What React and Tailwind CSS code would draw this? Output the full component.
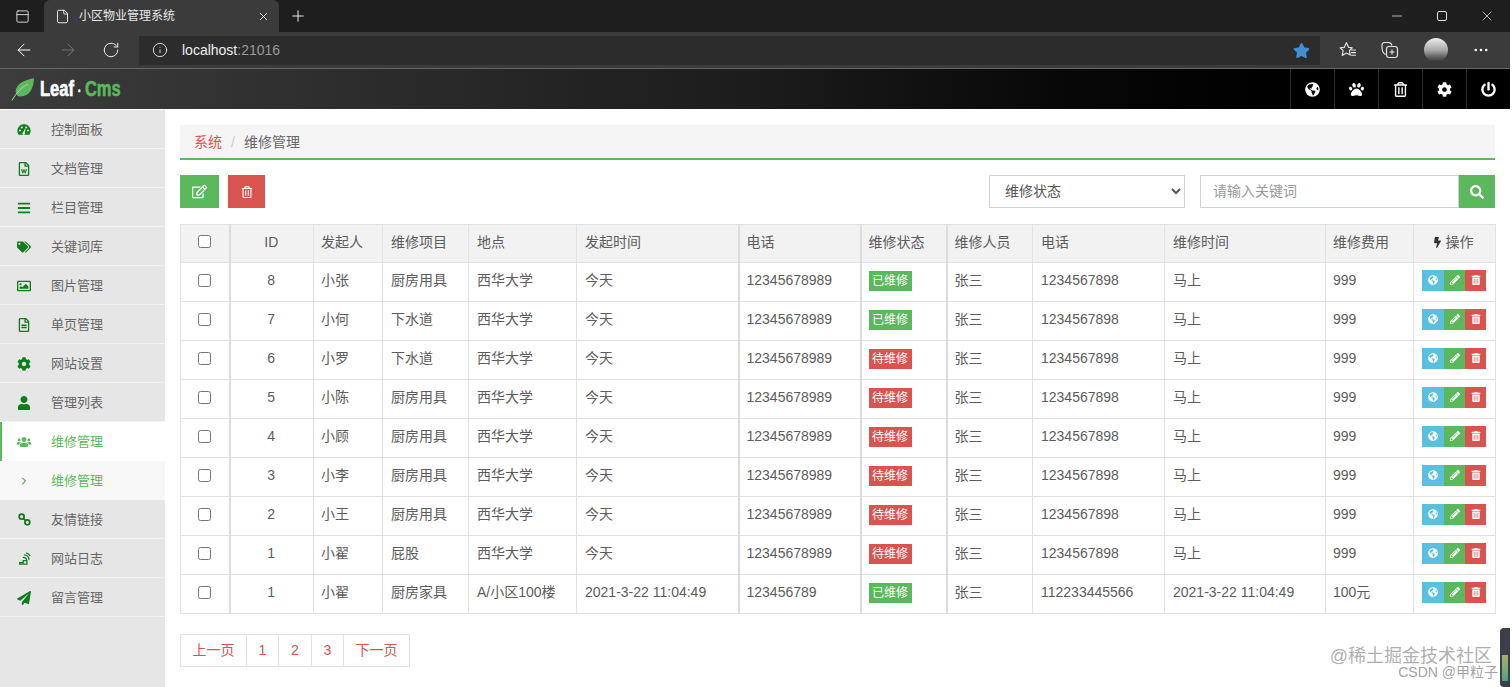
import {
  FaBars, FaBolt, FaCog, FaGlobeAmericas, FaPaperPlane, FaPaw, FaPencilAlt, FaPowerOff,
  FaRegEdit, FaRegFileAlt, FaRegFileWord, FaRegImage, FaRegTrashAlt, FaSearch,
  FaTags, FaTrashAlt, FaUser, FaUsers, FaStar,
} from "react-icons/fa";
import { ArrowLeft, ArrowRight, RotateCw, Info, Plus, X, Minus, Ellipsis, File, PanelTop, ChevronRight } from "lucide-react";

const MENU = [
  { label: "控制面板", icon: <DashIcon /> },
  { label: "文档管理", icon: <FaRegFileWord /> },
  { label: "栏目管理", icon: <FaBars /> },
  { label: "关键词库", icon: <FaTags /> },
  { label: "图片管理", icon: <FaRegImage /> },
  { label: "单页管理", icon: <FaRegFileAlt /> },
  { label: "网站设置", icon: <FaCog /> },
  { label: "管理列表", icon: <FaUser /> },
  { label: "维修管理", icon: <FaUsers size={16} />, state: "active" },
  { label: "维修管理", icon: <ChevronRight size={12} strokeWidth={2} />, state: "sub" },
  { label: "友情链接", icon: <ChainIcon /> },
  { label: "网站日志", icon: <LogIcon /> },
  { label: "留言管理", icon: <FaPaperPlane /> },
];

const ROWS = [
  ["8", "小张", "厨房用具", "西华大学", "今天", "12345678989", true, "张三", "1234567898", "马上", "999"],
  ["7", "小何", "下水道", "西华大学", "今天", "12345678989", true, "张三", "1234567898", "马上", "999"],
  ["6", "小罗", "下水道", "西华大学", "今天", "12345678989", false, "张三", "1234567898", "马上", "999"],
  ["5", "小陈", "厨房用具", "西华大学", "今天", "12345678989", false, "张三", "1234567898", "马上", "999"],
  ["4", "小顾", "厨房用具", "西华大学", "今天", "12345678989", false, "张三", "1234567898", "马上", "999"],
  ["3", "小李", "厨房用具", "西华大学", "今天", "12345678989", false, "张三", "1234567898", "马上", "999"],
  ["2", "小王", "厨房用具", "西华大学", "今天", "12345678989", false, "张三", "1234567898", "马上", "999"],
  ["1", "小翟", "屁股", "西华大学", "今天", "12345678989", false, "张三", "1234567898", "马上", "999"],
  ["1", "小翟", "厨房家具", "A/小区100楼", "2021-3-22 11:04:49", "123456789", true, "张三", "112233445566", "2021-3-22 11:04:49", "100元"],
];

const COLS = [49, 84, 69, 86, 108, 162, 122, 86, 86, 132, 161, 88, 82];
const HEADS = ["ID", "发起人", "维修项目", "地点", "发起时间", "电话", "维修状态", "维修人员", "电话", "维修时间", "维修费用"];
const thick = [0, 5, 6, 7];
const nudged = [1, 10];

function DashIcon() {
  return (
    <svg viewBox="0 0 16 14" width="14" height="13" fill="currentColor">
      <path fillRule="evenodd" d="M8 1a7.500 7.500 0 0 1 6.300 11.600c-.2.300-.5.400-.8.400h-11c-.3 0-.6-.1-.8-.4A7.500 7.500 0 0 1 8 1zM3.500 7a1.200 1.200 0 1 0 0 2.400 1.200 1.200 0 0 0 0-2.400zM5.500 3.500a1.200 1.200 0 1 0 0 2.400 1.200 1.200 0 0 0 0-2.400zM10.500 3.500a1.200 1.200 0 1 0 0 2.400 1.200 1.200 0 0 0 0-2.400zM12.500 7a1.200 1.200 0 1 0 0 2.400 1.200 1.200 0 0 0 0-2.400zM9 6 7 10a1.500 1.500 0 1 0 2 .7l.8-4.500z" />
    </svg>
  );
}

function ChainIcon() {
  return (
    <svg viewBox="0 0 16 16" width="13" height="13" fill="none" stroke="currentColor" strokeWidth="2.200">
      <circle cx="4.500" cy="4.500" r="3" />
      <circle cx="11.500" cy="11.500" r="3" />
      <path d="M6.500 6.500l3 3" />
    </svg>
  );
}

function LogIcon() {
  return (
    <svg viewBox="0 0 16 16" width="13" height="13" fill="none" stroke="currentColor" strokeWidth="1.500">
      <path d="M2 15h9V10.500H6.500V13H2zM6 6.500c2.500 0 4.500 1.500 4.500 3.500M7.500 3.500c3.500 0 6 2.500 6 6M10 1c2 .5 4 2 5 4" />
    </svg>
  );
}

function Leaf() {
  return (
    <svg viewBox="0 0 24 24" width="24" height="24">
      <path d="M4.500 15C5 6.500 13 3.500 23 1C22.500 10.500 19.500 19.500 9 19.500C7 19.500 5.500 18 4.500 15Z" fill="#5cb85c" />
      <path d="M1 23.500C5 16 10 11 17 7" stroke="#a8dca8" strokeWidth="1" fill="none" />
    </svg>
  );
}

function FavoritesIcon() {
  return (
    <svg viewBox="0 0 20 20" width="21" height="21" fill="none" stroke="#e8e8e8" strokeWidth="1.100">
      <path d="M9 2.500l2 4.500 3.500.4-2.600 2.700.7 4.300-3.600-2-4 2.300.8-4.600L3 7.500 7 7z" strokeLinejoin="round" />
      <path d="M13.500 9.500H18M13.500 12H18M13.500 14.500H18" />
    </svg>
  );
}

function CollectionsIcon() {
  return (
    <svg viewBox="0 0 20 20" width="20" height="20" fill="none" stroke="#e8e8e8" strokeWidth="1.100">
      <path d="M5.500 14.500C3 13 2 11 2 8V5a2.500 2.500 0 0 1 2.500-2.500h4c2 0 3 1 3.500 3" />
      <rect x="6.500" y="6.500" width="11" height="11" rx="2.500" />
      <path d="M12 9.500v5M9.500 12h5" />
    </svg>
  );
}

function BrowserChrome() {
  return (
    <div className="mr-[2px] text-white">
      <div className="flex h-[32px] bg-[#1e1e1e]">
        <div className="flex w-[44px] items-center justify-center">
          <PanelTop size={15} strokeWidth={1.5} color="#e0e0e0" />
        </div>
        <div className="flex w-[235px] items-center rounded-t-md bg-[#3b3b3b] pl-[11px] pr-[9px]">
          <File size={15} strokeWidth={1.4} />
          <span className="ml-[9px] text-[12px] text-[#e8e8e8]">小区物业管理系统</span>
          <X size={13} strokeWidth={1.5} className="ml-auto" />
        </div>
        <div className="ml-[10px] flex items-center">
          <Plus size={18} strokeWidth={1.2} />
        </div>
        <div className="ml-auto flex items-center gap-[32px] pr-[15px]">
          <Minus size={16} strokeWidth={1} />
          <span className="h-[10px] w-[10px] rounded-[2px] border border-[#e0e0e0]" />
          <X size={16} strokeWidth={1} />
        </div>
      </div>
      <div className="flex h-[37px] items-center border-b border-[#666] bg-[#3b3b3b]">
        <ArrowLeft size={20} strokeWidth={1.2} className="ml-[14px]" />
        <ArrowRight size={20} strokeWidth={1.2} color="#777" className="ml-[24px]" />
        <RotateCw size={18} strokeWidth={1.2} className="ml-[24px]" />
        <div className="ml-[19px] flex h-[29px] w-[1181px] items-center bg-[#2c2c2c] pl-[13px] pr-[10px]">
          <Info size={16} strokeWidth={1.2} />
          <span className="ml-[14px] text-[14px] text-[#f0f0f0]">
            localhost<span className="text-[#999]">:21016</span>
          </span>
          <FaStar size={17} color="#3f8fd2" className="ml-auto" />
        </div>
        <div className="ml-[17px]"><FavoritesIcon /></div>
        <div className="ml-[22px]"><CollectionsIcon /></div>
        <span className="ml-[24px] h-[24px] w-[24px] rounded-full bg-gradient-to-b from-[#eeeeee] via-[#aaaaaa] to-[#333333]" />
        <Ellipsis size={18} strokeWidth={1.5} className="ml-[24px]" />
      </div>
    </div>
  );
}

function TopBar() {
  return (
    <div className="mr-[2px] flex h-[40px] items-center bg-gradient-to-r from-[#3c3c3c] via-[#1c1c1c] to-[#000000]">
      <div className="ml-[11px] flex items-center">
        <Leaf />
        <div className="ml-[5px] w-[84px] origin-left scale-x-75 whitespace-nowrap text-[22px] font-bold leading-none [-webkit-text-stroke:0.6px_currentColor]">
          <span className="text-white">Leaf</span>
          <span className="mx-[5px] text-[14px] text-white">·</span>
          <span className="text-[#5cb85c]">Cms</span>
        </div>
      </div>
      <div className="ml-auto flex h-full bg-black text-white">
        {[<FaGlobeAmericas />, <FaPaw />, <FaRegTrashAlt />, <FaCog />, <FaPowerOff />].map((icon, i) => (
          <div key={i} className="flex w-[44px] items-center justify-center border-l border-[#2a2a2a] text-[15px]">
            {icon}
          </div>
        ))}
      </div>
    </div>
  );
}

function Sidebar() {
  return (
    <aside className="w-[165px] shrink-0 bg-[#e6e6e6]">
      {MENU.map((item, i) => {
        const rowCls = item.state === "active"
          ? "border-l-2 border-l-[#5cb85c] bg-white pl-[15px] text-[#5cb85c]"
          : item.state === "sub"
            ? "bg-[#f8f8f8] pl-[17px] text-[#5cb85c]"
            : "pl-[17px] text-[#666] shadow-[inset_0_-1px_0_#f2f2f2]";
        const iconCls = item.state === "active" ? "text-[#5cb85c]" : "text-[#0f7d1c]";
        return (
          <div key={i} className={`flex h-[39px] items-center text-[13px] ${rowCls}`}>
            <span className={`flex w-[14px] justify-center text-[14px] ${iconCls}`}>{item.icon}</span>
            <span className="ml-[20px]">{item.label}</span>
          </div>
        );
      })}
    </aside>
  );
}

function Toolbar() {
  return (
    <div className="mt-[15px] flex h-[33px]">
      <button className="flex w-[39px] items-center justify-center bg-[#5cb85c] text-[15px] text-white"><FaRegEdit /></button>
      <button className="ml-[9px] flex w-[37px] items-center justify-center bg-[#d9534f] text-[12px] text-white"><FaRegTrashAlt /></button>
      <select className="ml-auto h-full w-[196px] border border-[#ccd3d3] bg-white pb-[2px] pl-[11px] pr-[4px] text-[14px] text-[#555]">
        <option>维修状态</option>
      </select>
      <input
        placeholder="请输入关键词"
        className="ml-[15px] h-full w-[259px] border border-[#ccd3d3] px-[12px] pb-[2px] text-[14px] text-[#555] outline-none placeholder:text-[#999]"
      />
      <button className="flex w-[36px] items-center justify-center bg-[#5cb85c] text-[14px] text-white"><FaSearch /></button>
    </div>
  );
}

function DataTable() {
  const cell = "border border-[#e2e2e2] px-[8px]";
  const thickCell = "border-l-2 border-l-[#dcdcdc] pl-[7px]";
  return (
    <table className="mt-[16px] w-[1315px] table-fixed border-collapse text-[14px] text-[#5c5c5c]">
      <colgroup>
        {COLS.map((w, i) => <col key={i} style={{ width: w }} />)}
      </colgroup>
      <thead>
        <tr className="h-[38px] bg-[#f2f2f2]">
          <th className={`${cell} pb-[5px] text-center font-normal`}><input type="checkbox" readOnly className="align-middle" /></th>
          {HEADS.map((h, i) => (
            <th key={i} className={`${cell} pb-[2px] font-normal ${i === 0 ? "text-center" : "text-left"} ${thick.includes(i) ? thickCell : ""} ${nudged.includes(i) ? "pl-[7px]" : ""}`}>{h}</th>
          ))}
          <th className={`${cell} pb-[2px] pr-[12px] text-center font-normal`}>
            <span className="inline-flex items-center justify-center gap-[3px]"><FaBolt size={11} color="#333" />操作</span>
          </th>
        </tr>
      </thead>
      <tbody>
        {ROWS.map((r, ri) => (
          <tr key={ri} className="h-[39px] bg-white [&>td]:pb-[4px]">
            <td className={`${cell} text-center`}><input type="checkbox" readOnly className="mb-[1px] align-middle" /></td>
            <td className={`${cell} ${thickCell} text-center`}>{r[0]}</td>
            <td className={`${cell} pl-[7px]`}>{r[1]}</td>
            <td className={cell}>{r[2]}</td>
            <td className={cell}>{r[3]}</td>
            <td className={cell}>{r[4]}</td>
            <td className={`${cell} ${thickCell}`}>{r[5]}</td>
            <td className={`${cell} ${thickCell}`}>
              <span className={`inline-flex h-[20px] w-[43px] items-center justify-center text-[12px] text-white ${r[6] ? "bg-[#5cb85c]" : "bg-[#d9534f]"}`}>
                {r[6] ? "已维修" : "待维修"}
              </span>
            </td>
            <td className={`${cell} ${thickCell}`}>{r[7]}</td>
            <td className={cell}>{r[8]}</td>
            <td className={cell}>{r[9]}</td>
            <td className={`${cell} pl-[7px]`}>{r[10]}</td>
            <td className={`${cell} pr-[12px] text-center`}>
              <div className="inline-flex h-[21px] align-middle text-[10px] text-white">
                <span className="flex w-[22px] items-center justify-center bg-[#5bc0de]"><FaGlobeAmericas /></span>
                <span className="flex w-[21px] items-center justify-center bg-[#5cb85c]"><FaPencilAlt /></span>
                <span className="flex w-[21px] items-center justify-center bg-[#d9534f]"><FaTrashAlt /></span>
              </div>
            </td>
          </tr>
        ))}
      </tbody>
    </table>
  );
}

function Pagination() {
  const pages = [["上一页", "w-[66px]"], ["1", "w-[32px]"], ["2", "w-[33px]"], ["3", "w-[32px]"], ["下一页", "w-[66px]"]];
  return (
    <div className="mt-[20px] flex h-[33px] w-fit border-y border-r border-[#e2e2e2] text-[14px] text-[#d9534f]">
      {pages.map(([t, w]) => (
        <span key={t} className={`flex items-center justify-center border-l border-[#e2e2e2] ${w}`}>{t}</span>
      ))}
    </div>
  );
}

export default function App() {
  return (
    <div className="relative h-[687px] w-full overflow-hidden bg-white [font-family:'Liberation_Sans','Noto_Sans_CJK_SC',sans-serif]">
      <BrowserChrome />
      <TopBar />
      <div className="flex h-[578px] border-t border-white">
        <Sidebar />
        <main className="min-w-0 flex-1 pl-[15px] pr-[17px] pt-[15px]">
          <div className="flex h-[35px] items-center border-b-2 border-[#5cb85c] bg-[#f5f5f5] pl-[14px] pt-[1px] text-[14px]">
            <span className="text-[#d9534f]">系统</span>
            <span className="mx-[9px] text-[#ccc]">/</span>
            <span className="text-[#666]">维修管理</span>
          </div>
          <Toolbar />
          <DataTable />
          <Pagination />
        </main>
      </div>

      {/* screenshot watermark and the little meter in the corner */}
      <div className="absolute right-[20px] top-[646px] text-[18px] leading-[20px] text-[#999]/80">@稀土掘金技术社区</div>
      <div className="absolute right-[14px] top-[664px] text-[14px] leading-[17px] text-[#888]/80">CSDN @甲粒子</div>
      <div className="absolute right-[2px] top-[628px] flex h-[59px] w-[10px] items-end rounded-l-sm bg-[#3a3f4a] px-[2px]">
        <span className="mb-[6px] h-[26px] w-full bg-gradient-to-b from-[#a9b06a] to-[#4aa07f]" />
      </div>
    </div>
  );
}
